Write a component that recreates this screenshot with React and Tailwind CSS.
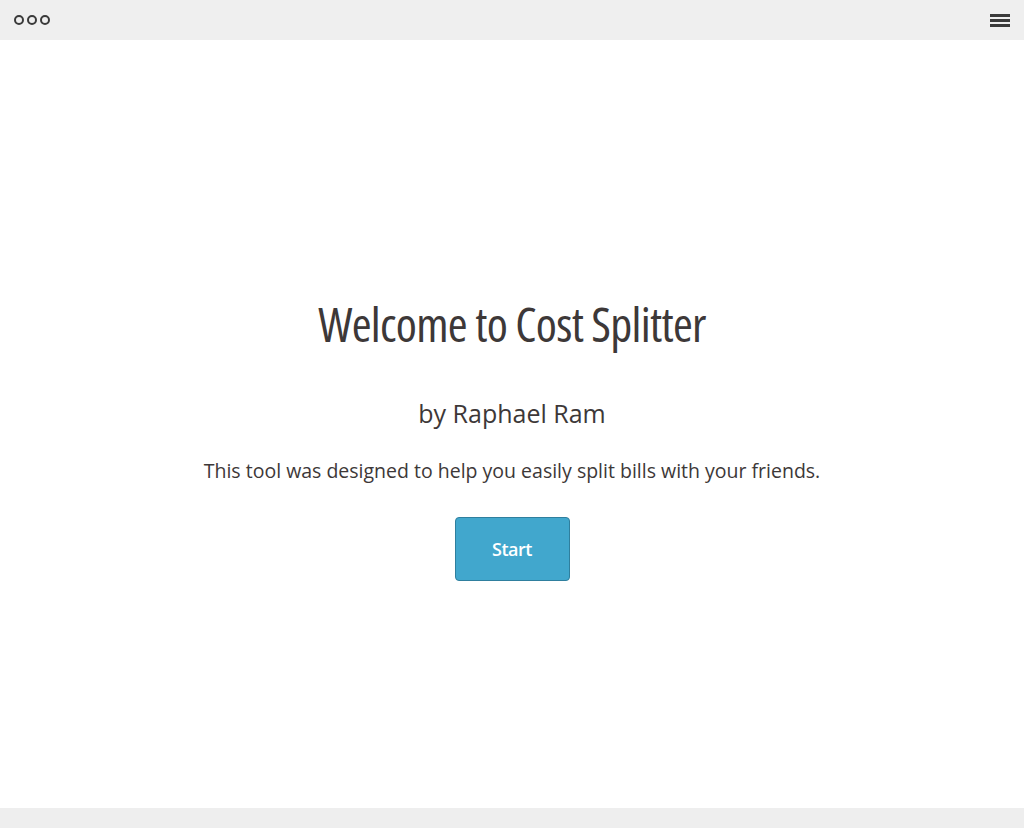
export default function App() {
  return (
    <div className="flex h-[828px] w-full flex-col bg-white font-['Open_Sans',sans-serif] text-[#3d3838]">
      <header className="flex h-10 items-center justify-between bg-[#efefef] pl-[14px] pr-[14px]">
        <div className="flex items-center gap-[3px]">
          <span className="h-[10px] w-[10px] rounded-full border-2 border-[#3a3a3a]" />
          <span className="h-[10px] w-[10px] rounded-full border-2 border-[#3a3a3a]" />
          <span className="h-[10px] w-[10px] rounded-full border-2 border-[#3a3a3a]" />
        </div>
        <div className="flex w-[20px] flex-col gap-[2px]">
          <span className="h-[3px] w-full bg-[#3a3a3a]" />
          <span className="h-[3px] w-full bg-[#3a3a3a]" />
          <span className="h-[3px] w-full bg-[#3a3a3a]" />
        </div>
      </header>

      <main className="flex flex-1 flex-col items-center pt-[252px]">
        <h1 className="text-[48px] font-medium leading-[64px] tracking-[-0.7px] [font-stretch:75%]">
          Welcome to Cost Splitter
        </h1>
        <p className="mt-[41px] text-[25px] leading-[32px]">by Raphael Ram</p>
        <p className="mt-[29px] text-[19.5px] leading-[26px]">
          This tool was designed to help you easily split bills with your friends.
        </p>
        <button className="mt-[33px] h-[64px] w-[115px] rounded-[4px] border border-[#2f7f9e] bg-[#41a7cd] text-[18px] font-semibold tracking-[-0.5px] text-white">
          Start
        </button>
      </main>

      <footer className="h-5 bg-[#eeeeee]" />
    </div>
  );
}
